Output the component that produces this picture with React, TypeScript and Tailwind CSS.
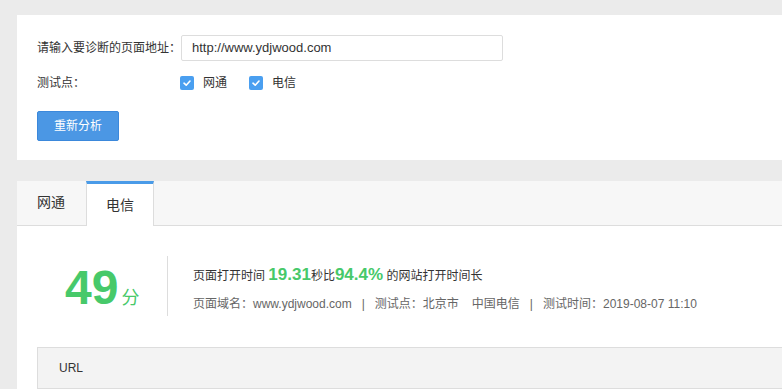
import React from 'react';

const FONT = { fontFamily: '"Liberation Sans", "Noto Sans CJK SC", Arial, sans-serif' };

const Check: React.FC<{ label: string }> = ({ label }) => (
  <label className="flex items-center mr-[22px]">
    <span className="w-[14px] h-[14px] rounded-[2px] bg-[#4a9ff0] flex items-center justify-center">
      <svg width="10" height="10" viewBox="0 0 10 10">
        <path d="M2 5.2 L4.2 7.2 L8 3" fill="none" stroke="#fff" strokeWidth="1.6" strokeLinecap="round" strokeLinejoin="round" />
      </svg>
    </span>
    <span className="ml-[9px] text-[12px] text-[#333]">{label}</span>
  </label>
);

const Sep = () => <span className="mx-[10px]">|</span>;

export default function App() {
  return (
    <div className="min-h-screen bg-[#ebebeb] pl-[17px] pt-[15px] overflow-hidden" style={FONT}>
      {/* diagnose form */}
      <div className="bg-white mr-[-40px] pt-[20px] pb-[19px] px-[20px]">
        <div className="flex items-center h-[26px]">
          <span className="w-[144px] text-[12px] text-[#333]">请输入要诊断的页面地址：</span>
          <div className="w-[322px] h-[26px] border border-[#ddd] rounded-[2px] flex items-center px-[10px] text-[13px] text-[#333]">
            http://www.ydjwood.com
          </div>
        </div>
        <div className="flex items-center h-[20px] mt-[12px]">
          <span className="w-[143px] text-[12px] text-[#333]">测试点：</span>
          <Check label="网通" />
          <Check label="电信" />
        </div>
        <button className="mt-[18px] w-[82px] h-[30px] bg-[#4b97e4] border border-[#3b88db] rounded-[2px] text-white text-[12px]">
          重新分析
        </button>
      </div>

      {/* result */}
      <div className="bg-white mr-[-40px] mt-[21px]">
        <div className="flex h-[45px] bg-[#f7f7f7] border-b border-[#ddd]">
          <div className="w-[69px] pl-[20px] flex items-center text-[14px] text-[#333] pb-[2px]">网通</div>
          <div className="w-[68px] h-[45px] bg-white border-t-[3px] border-t-[#4a9be8] border-x border-x-[#ddd] flex items-center justify-center text-[14px] text-[#333]">
            电信
          </div>
        </div>

        <div className="flex pt-[30px]">
          <div className="w-[150px] pl-[48px] flex items-baseline text-[#47c96a] pt-[6px]">
            <span className="text-[48px] font-bold leading-[52px]">49</span>
            <span className="text-[18px] ml-[3px]">分</span>
          </div>
          <div className="w-px h-[60px] bg-[#ddd]" />
          <div className="pl-[25px] pt-[6px]">
            <div className="flex items-baseline text-[12px] text-[#333] h-[22px]">
              <span>页面打开时间&nbsp;</span>
              <span className="text-[17px] font-bold text-[#47c96a]">19.31</span>
              <span>秒比</span>
              <span className="text-[17px] font-bold text-[#47c96a]">94.4%</span>
              <span>&nbsp;的网站打开时间长</span>
            </div>
            <div className="text-[12px] text-[#666] mt-[11px] whitespace-nowrap">
              <span>页面域名：www.ydjwood.com</span>
              <Sep />
              <span>测试点：北京市</span>
              <span className="ml-[13px]">中国电信</span>
              <Sep />
              <span>测试时间：2019-08-07 11:10</span>
            </div>
          </div>
        </div>

        <div className="ml-[20px] mt-[31px] h-[42px] bg-[#f3f3f3] border border-[#ddd] flex items-center pl-[21px] text-[12px] text-[#333]">
          URL
        </div>
      </div>
    </div>
  );
}
